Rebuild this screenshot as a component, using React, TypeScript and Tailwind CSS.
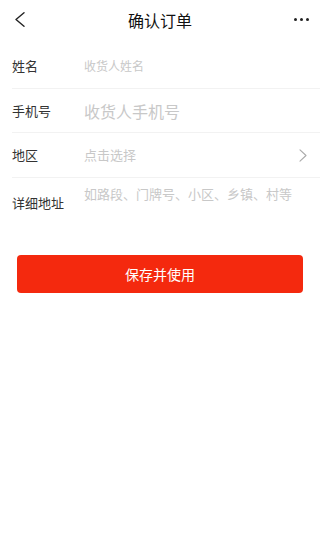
import React from "react";

export default function App() {
  return (
    <div className="w-[320px] h-[547px] bg-white font-['Noto_Sans_CJK_SC','Noto_Sans',sans-serif] text-[#333] overflow-hidden">
      {/* Header */}
      <div className="h-[39px] flex items-center">
        <div className="w-[60px] pl-[14px] flex items-center">
          <svg width="11" height="15" viewBox="0 0 11 15" fill="none">
            <path d="M10 0.8 L2 7.5 L10 14.2" stroke="#222" strokeWidth="1.4" strokeLinecap="round" strokeLinejoin="round" />
          </svg>
        </div>
        <div className="flex-1 text-center text-[16px] leading-[20px] text-[#111]">确认订单</div>
        <div className="w-[60px] pr-[11px] flex items-center justify-end gap-[3px]">
          <span className="w-[3px] h-[3px] rounded-full bg-[#222]" />
          <span className="w-[3px] h-[3px] rounded-full bg-[#222]" />
          <span className="w-[3px] h-[3px] rounded-full bg-[#222]" />
        </div>
      </div>

      {/* Form */}
      <div className="mt-[5px] pl-[12px]">
        <div className="h-[45px] flex items-center border-b border-[#f2f2f2]">
          <span className="w-[72px] text-[13px] leading-[18px]">姓名</span>
          <span className="text-[12px] leading-[16px] text-[#c8c8c8]">收货人姓名</span>
        </div>
        <div className="h-[44px] flex items-center border-b border-[#f2f2f2]">
          <span className="w-[72px] text-[13px] leading-[18px]">手机号</span>
          <span className="text-[16px] leading-[20px] text-[#c8c8c8]">收货人手机号</span>
        </div>
        <div className="h-[45px] flex items-center border-b border-[#f2f2f2] pr-[13px]">
          <span className="w-[72px] text-[13px] leading-[18px]">地区</span>
          <span className="flex-1 text-[13px] leading-[18px] text-[#c8c8c8]">点击选择</span>
          <svg width="8" height="13" viewBox="0 0 8 13" fill="none">
            <path d="M1 0.8 L7 6.5 L1 12.2" stroke="#aaa" strokeWidth="1.1" strokeLinecap="round" strokeLinejoin="round" />
          </svg>
        </div>
        <div className="h-[50px] flex items-start">
          <span className="w-[72px] pt-[16px] text-[13px] leading-[18px]">详细地址</span>
          <span className="pt-[7px] text-[13px] leading-[18px] text-[#c8c8c8]">如路段、门牌号、小区、乡镇、村等</span>
        </div>
      </div>

      {/* Button */}
      <div className="mt-[27px] px-[17px]">
        <button className="w-full h-[38px] rounded-[4px] bg-[#f4290e] text-white text-[14px] leading-[20px] flex items-center justify-center">
          保存并使用
        </button>
      </div>
    </div>
  );
}
